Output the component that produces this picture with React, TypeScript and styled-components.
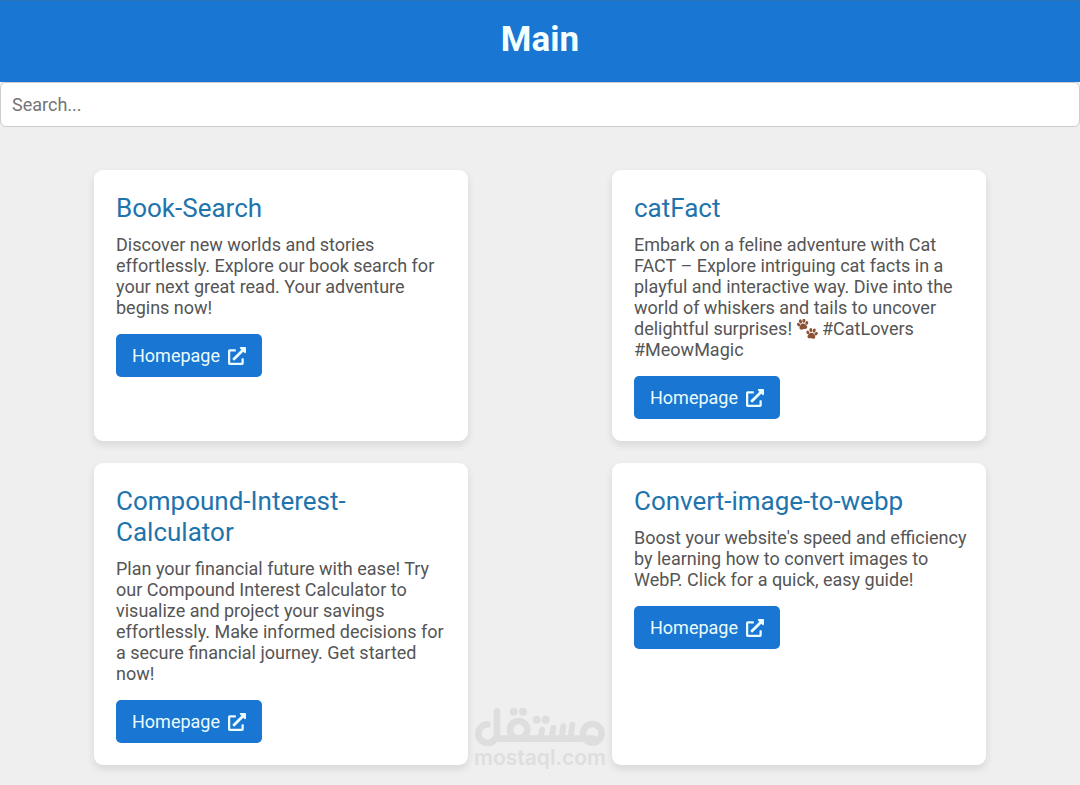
import React, { useState } from "react";
import styled, { createGlobalStyle } from "styled-components";
import { FaExternalLinkAlt } from "react-icons/fa";

const GlobalStyle = createGlobalStyle`
  *, *::before, *::after { box-sizing: border-box; }
  body {
    margin: 0;
    background: #efefef;
    color: #555;
    font-family: Roboto, "Liberation Sans", sans-serif;
    font-size: 18px;
    line-height: 21px;
  }
`;

const Page = styled.div`
  position: relative;
`;

const Header = styled.header`
  padding: 19px 22px 22px;
  background: #1976d2;
  border-top: 1px solid #2a72b5;
  text-align: center;
`;

const Title = styled.h1`
  margin: 0;
  color: #f4ffff;
  font-size: 35px;
  font-weight: 700;
  line-height: 40px;
`;

const SearchInput = styled.input`
  display: block;
  width: 100%;
  padding: 11px;
  border: 1px solid #ccc;
  border-radius: 6px;
  background: #fff;
  color: #333;
  font: inherit;
  outline-color: #1976d2;

  &::placeholder { color: #757575; opacity: 1; }
`;

const Grid = styled.main`
  display: grid;
  grid-template-columns: repeat(auto-fill, minmax(min(330px, 100%), 1fr));
  justify-items: center;
  gap: 22px;
  padding: 43px 33px 20px;
`;

const Card = styled.article`
  display: flex;
  flex-direction: column;
  align-items: flex-start;
  width: 100%;
  max-width: 374px;
  padding: 23px 16px 22px 22px;
  border-radius: 9px;
  background: #fff;
  box-shadow: 0 4px 9px rgba(0, 0, 0, 0.1);
`;

const CardTitle = styled.h2`
  margin: 0 0 10px;
  color: #1f74ad;
  font-size: 26px;
  font-weight: 400;
  line-height: 31px;
`;

const Description = styled.p`
  margin: 0 0 16px;
`;

const HomeLink = styled.a`
  display: inline-flex;
  align-items: center;
  gap: 8px;
  padding: 11px 16px;
  border-radius: 5px;
  background: #1976d2;
  color: #eafcff;
  text-decoration: none;

  &:hover { background: #1565c0; }
`;

const Paws = styled.svg`
  width: 21px;
  height: 20px;
  vertical-align: -4px;
`;

const Watermark = styled.div`
  position: absolute;
  bottom: 17px;
  left: 50%;
  display: flex;
  flex-direction: column;
  align-items: center;
  transform: translateX(-50%);
  color: #dedede;
  font-family: Inter, sans-serif;
  font-size: 21px;
  font-weight: 600;
  line-height: 21px;
  pointer-events: none;
`;

const PawPrints = () => (
  <Paws viewBox="0 0 21 20" role="img" aria-label="paw prints">
    <defs>
      <g id="paw" fill="#8b5236">
        <ellipse cx="1.5" cy="4.9" rx="1.4" ry="1.9" transform="rotate(-30 1.5 4.9)" />
        <ellipse cx="4.1" cy="2.2" rx="1.5" ry="2.1" transform="rotate(-8 4.1 2.2)" />
        <ellipse cx="7.5" cy="2.2" rx="1.5" ry="2.1" transform="rotate(12 7.5 2.2)" />
        <ellipse cx="9.9" cy="5" rx="1.4" ry="1.9" transform="rotate(32 9.9 5)" />
        <path d="M5.6 4.6C3.5 4.6 1.6 7.2 1.7 9c.1 1.9 2.3 1.5 3.9 1.3 1.6.2 3.8.6 3.9-1.3.1-1.8-1.8-4.4-3.9-4.4Z" />
      </g>
    </defs>
    <use href="#paw" transform="rotate(-12 5 5)" />
    <use href="#paw" transform="translate(9.3 9) rotate(8 5 5)" />
  </Paws>
);

const MostaqlMark = () => (
  <svg width="130" height="40" viewBox="45 55 390 120" aria-hidden="true">
    <g fill="none" stroke="#dedede" strokeWidth="20" strokeLinecap="round">
      <path d="M82 107A28 28 0 1 0 111 137V68" />
      <path d="M108 150H400" />
      <circle cx="176" cy="123" r="26" />
      <path d="M246 123L243 148M280 118L275 148M310 113L305 148M337 108L332 148" strokeWidth="18" />
      <circle cx="397" cy="134" r="28" />
    </g>
    <g fill="#dedede">
      <circle cx="161" cy="69" r="12" />
      <circle cx="189" cy="69" r="12" />
      <circle cx="230" cy="93" r="12" />
      <circle cx="257" cy="93" r="12" />
    </g>
  </svg>
);

type Project = { name: string; description: React.ReactNode };

const projects: Project[] = [
  {
    name: "Book-Search",
    description:
      "Discover new worlds and stories effortlessly. Explore our book search for your next great read. Your adventure begins now!",
  },
  {
    name: "catFact",
    description: (
      <>
        {"Embark on a feline adventure with Cat FACT – Explore intriguing cat facts in a playful and interactive way. Dive into the world of whiskers and tails to uncover delightful surprises! "}
        <PawPrints />
        {" #CatLovers #MeowMagic"}
      </>
    ),
  },
  {
    name: "Compound-Interest-Calculator",
    description:
      "Plan your financial future with ease! Try our Compound Interest Calculator to visualize and project your savings effortlessly. Make informed decisions for a secure financial journey. Get started now!",
  },
  {
    name: "Convert-image-to-webp",
    description:
      "Boost your website's speed and efficiency by learning how to convert images to WebP. Click for a quick, easy guide!",
  },
];

export default function App() {
  const [query, setQuery] = useState("");
  const visible = projects.filter((p) => p.name.toLowerCase().includes(query.trim().toLowerCase()));

  return (
    <Page>
      <GlobalStyle />
      <Header>
        <Title>Main</Title>
      </Header>
      <SearchInput
        type="text"
        aria-label="Search projects"
        placeholder="Search..."
        value={query}
        onChange={(e) => setQuery(e.target.value)}
      />
      <Grid>
        {visible.map((project) => (
          <Card key={project.name}>
            <CardTitle>{project.name}</CardTitle>
            <Description>{project.description}</Description>
            <HomeLink href={`#${project.name}`}>
              Homepage
              <FaExternalLinkAlt size={18} aria-hidden="true" />
            </HomeLink>
          </Card>
        ))}
      </Grid>
      <Watermark>
        <MostaqlMark />
        <span>mostaql.com</span>
      </Watermark>
    </Page>
  );
}
